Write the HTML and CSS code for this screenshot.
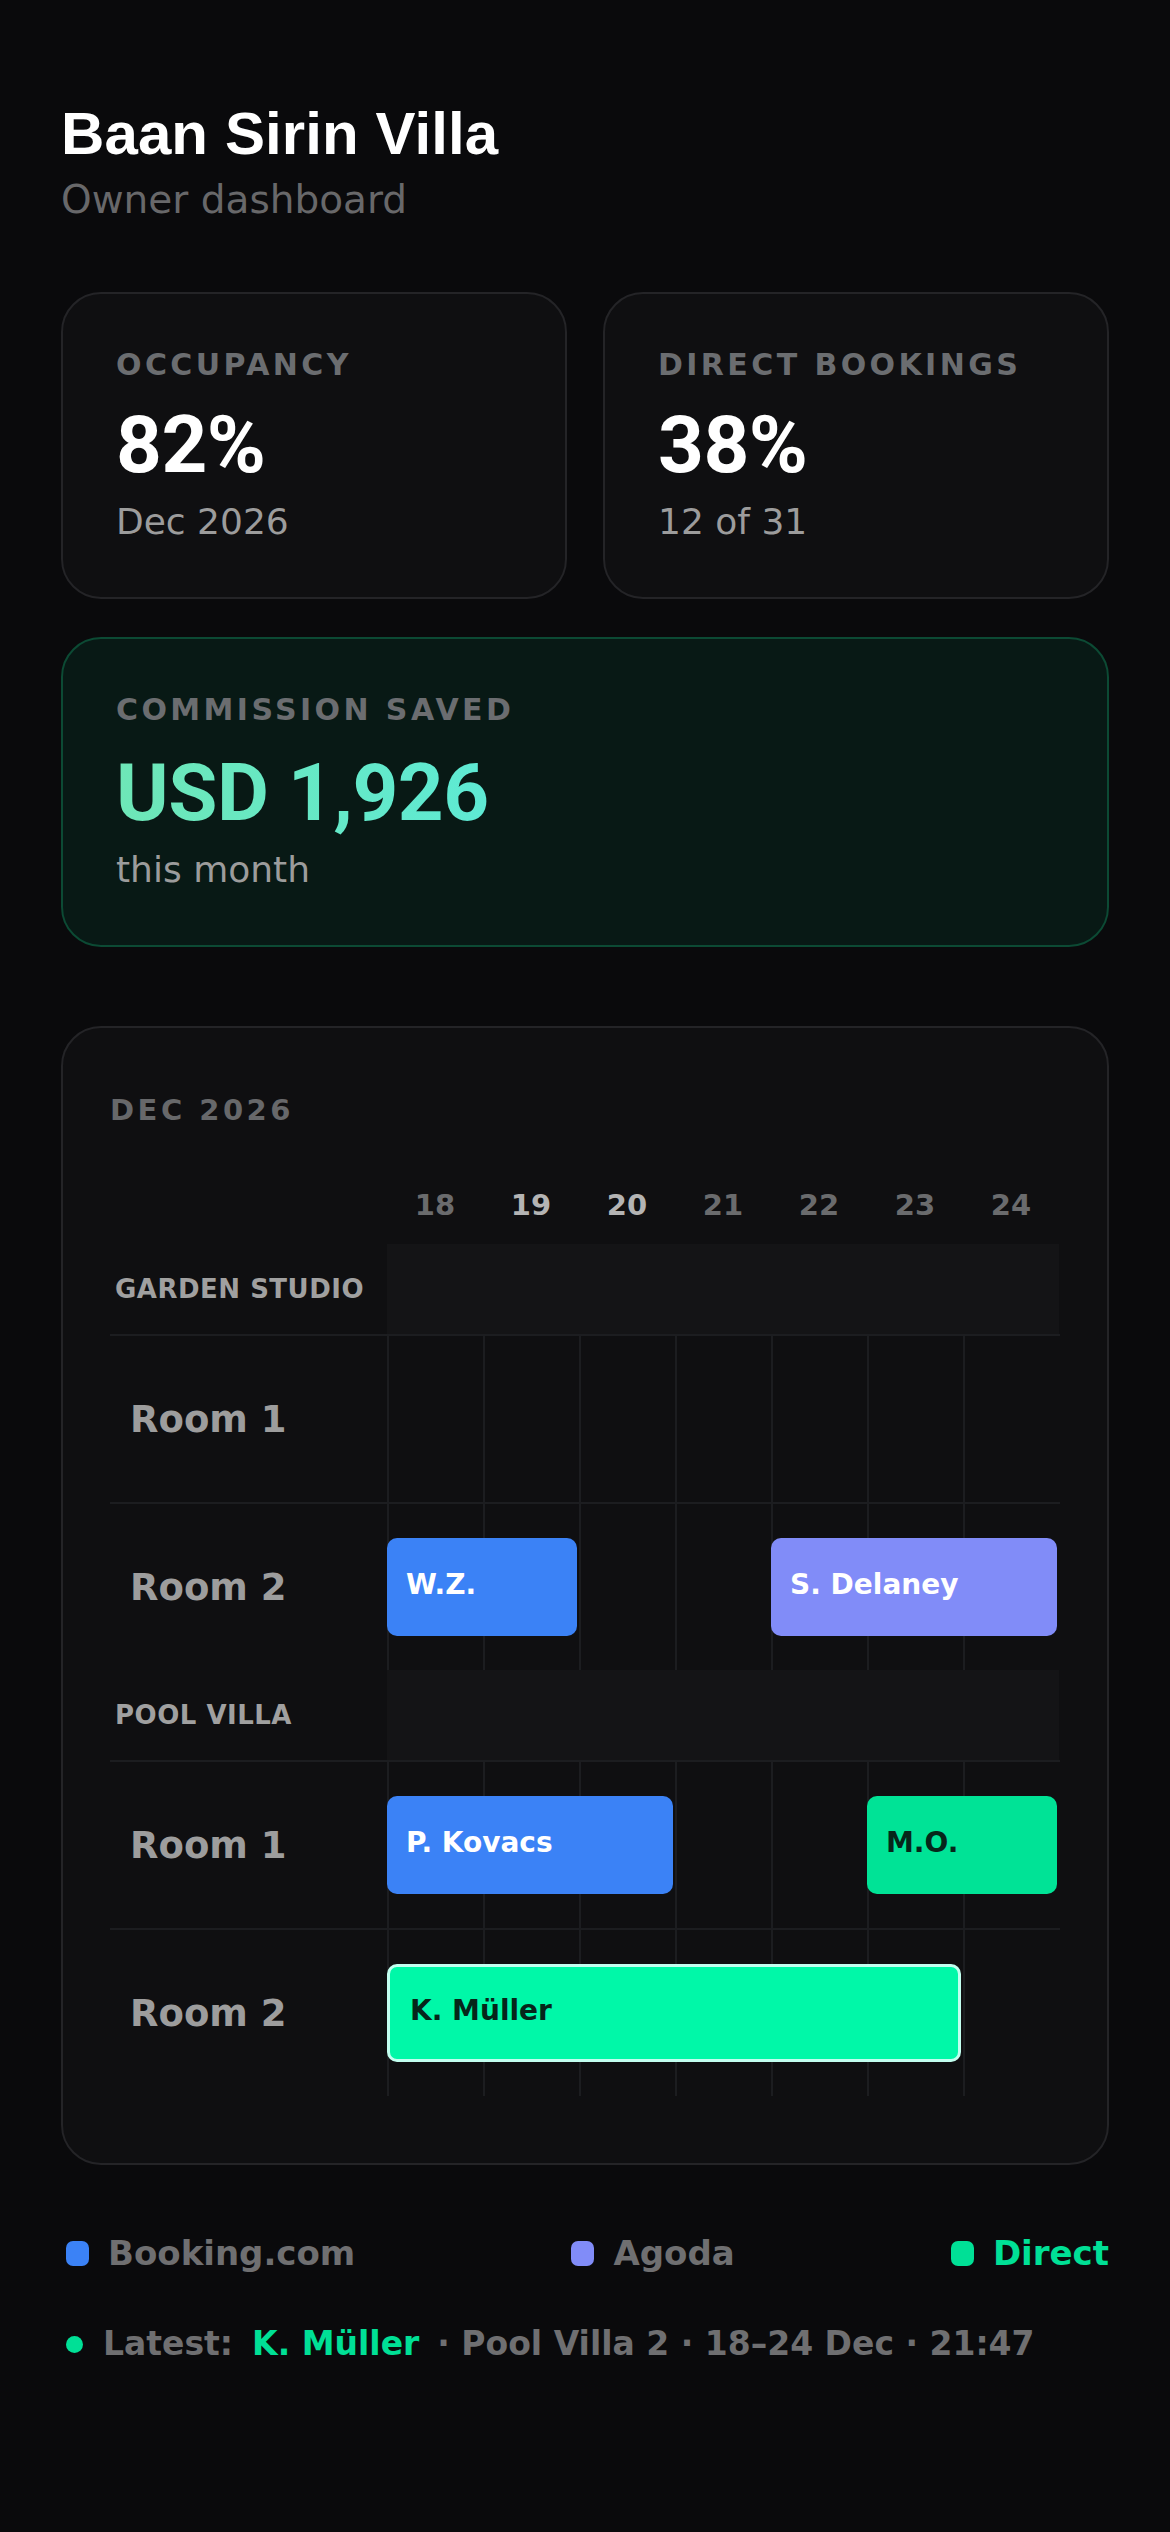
FILE: index.html
```html
<!DOCTYPE html>
<html lang="en">
<head>
    <meta charset="UTF-8">
    <meta name="viewport" content="width=device-width, initial-scale=1.0">
    <title>Baan Sirin Villa</title>
    <link rel="stylesheet" href="styles.css">
</head>
<body>
    <main class="page">
        <header class="head">
            <h1>Baan Sirin Villa</h1>
            <p>Owner dashboard</p>
        </header>

        <section class="stats">
            <div class="stat">
                <div class="stat-label">OCCUPANCY</div>
                <div class="stat-value">82%</div>
                <div class="stat-sub">Dec 2026</div>
            </div>
            <div class="stat">
                <div class="stat-label">DIRECT BOOKINGS</div>
                <div class="stat-value">38%</div>
                <div class="stat-sub">12 of 31</div>
            </div>
        </section>

        <div class="stat saved">
            <div class="stat-label">COMMISSION SAVED</div>
            <div class="stat-value"><span class="green-text">USD 1,926</span></div>
            <div class="stat-sub">this month</div>
        </div>

        <section class="cal">
            <div class="cal-title">DEC 2026</div>

            <div class="days">
                <span></span>
                <span>18</span>
                <span class="weekend">19</span>
                <span class="weekend">20</span>
                <span>21</span>
                <span>22</span>
                <span>23</span>
                <span>24</span>
            </div>

            <div class="group">
                <div class="group-name">GARDEN STUDIO</div>
                <div class="band"></div>
            </div>
            <div class="room">
                <div class="room-name">Room 1</div>
                <div class="track"></div>
            </div>
            <div class="room">
                <div class="room-name">Room 2</div>
                <div class="track">
                    <div class="bar booking" style="grid-column: 1 / 3">W.Z.</div>
                    <div class="bar agoda" style="grid-column: 5 / 8">S. Delaney</div>
                </div>
            </div>

            <div class="group">
                <div class="group-name">POOL VILLA</div>
                <div class="band"></div>
            </div>
            <div class="room">
                <div class="room-name">Room 1</div>
                <div class="track">
                    <div class="bar booking" style="grid-column: 1 / 4">P. Kovacs</div>
                    <div class="bar direct" style="grid-column: 6 / 8">M.O.</div>
                </div>
            </div>
            <div class="room">
                <div class="room-name">Room 2</div>
                <div class="track">
                    <div class="bar direct newest" style="grid-column: 1 / 7">K. Müller</div>
                </div>
            </div>
        </section>

        <div class="legend">
            <div class="legend-item"><i class="dot booking"></i>Booking.com</div>
            <div class="legend-item"><i class="dot agoda"></i>Agoda</div>
            <div class="legend-item on"><i class="dot direct"></i>Direct</div>
        </div>

        <div class="latest-line">
            <i class="pulse"></i>
            <span>Latest:</span>
            <span class="who">K. Müller</span>
            <span>· Pool Villa 2 · 18–24 Dec · 21:47</span>
        </div>
    </main>
</body>
</html>
```

FILE: styles.css
```css
* {
    margin: 0;
    padding: 0;
    box-sizing: border-box;
}

body {
    background: #0a0a0c;
    color: #fff;
    font-family: "DejaVu Sans", sans-serif;
}

.page {
    width: 1170px;
    padding: 98px 61px 80px;
}

/* header */
.head h1 {
    font-family: "Liberation Sans", Arial, sans-serif;
    font-size: 60px;
    line-height: 72px;
    font-weight: 700;
    letter-spacing: 0.1px;
}

.head p {
    margin-top: 7px;
    font-size: 39px;
    line-height: 45px;
    color: #68686a;
}

/* stat cards */
.stats {
    display: grid;
    grid-template-columns: 1fr 1fr;
    gap: 36px;
    margin-top: 70px;
}

.stat {
    background: #0f0f11;
    border: 2px solid #242427;
    border-radius: 40px;
    padding: 53px 53px 54px;
}

.stat-label {
    font-size: 30px;
    line-height: 36px;
    font-weight: 700;
    letter-spacing: 3.4px;
    color: #6b6d70;
}

.stat-value {
    margin-top: 22px;
    font-family: Roboto, sans-serif;
    font-size: 80px;
    line-height: 80px;
    font-weight: 700;
    letter-spacing: -0.5px;
}

.stat-sub {
    margin-top: 16px;
    font-size: 36px;
    line-height: 42px;
    color: #9c9c9c;
}

.saved {
    margin-top: 38px;
    background: #081915;
    border-color: #0c4a34;
}

.saved .stat-value {
    margin-top: 25px;
}

.green-text {
    background: linear-gradient(90deg, #6ee7b7, #5eead4);
    -webkit-background-clip: text;
    background-clip: text;
    color: transparent;
}

/* calendar */
.cal {
    margin-top: 79px;
    background: #0f0f11;
    border: 2px solid #242427;
    border-radius: 40px;
    padding: 65px 47px 67px;
}

.cal-title {
    font-size: 29px;
    line-height: 35px;
    font-weight: 700;
    letter-spacing: 3.5px;
    color: #67686a;
    margin-bottom: 60px;
}

.days,
.group,
.room {
    display: grid;
    grid-template-columns: 277px 672px;
}

.days {
    grid-template-columns: 277px repeat(7, 96px);
    height: 34px;
    margin-bottom: 22px;
    font-size: 29px;
    line-height: 34px;
    font-weight: 700;
    color: #6a6b6d;
    text-align: center;
}

.days .weekend {
    color: #b4b4b4;
}

.group {
    height: 90px;
}

.group-name {
    display: flex;
    align-items: center;
    padding-left: 5px;
    font-size: 26px;
    font-weight: 700;
    letter-spacing: 0.5px;
    color: #a0a0a0;
}

.band {
    background: #141416;
}

.room {
    height: 168px;
    border-top: 2px solid #1c1d20;
}

.room-name {
    display: flex;
    align-items: center;
    padding-left: 20px;
    font-size: 37px;
    font-weight: 700;
    color: #9d9d9d;
}

.track {
    display: grid;
    grid-template-columns: repeat(7, 96px);
    align-items: center;
    background-image: linear-gradient(to right, #1c1d20 2px, transparent 2px);
    background-size: 96px 100%;
}

.bar {
    grid-row: 1;
    height: 98px;
    margin-right: 2px;
    border-radius: 10px;
    display: flex;
    align-items: center;
    padding: 0 0 5px 19px;
    font-size: 28px;
    font-weight: 700;
    color: #fff;
}

.bar.booking {
    background: #3b82f6;
}

.bar.agoda {
    background: #818cf8;
}

.bar.direct {
    background: #00e396;
    color: #06261a;
}

.bar.newest {
    background: #00f8a8;
    border: 3px solid #c2fff0;
    padding-left: 20px;
}

/* legend */
.legend {
    display: flex;
    justify-content: space-between;
    margin-top: 68px;
    padding-left: 5px;
    font-size: 34px;
    line-height: 40px;
    font-weight: 700;
    color: #6f6f71;
}

.legend-item {
    display: flex;
    align-items: center;
    gap: 19px;
}

.legend-item.on {
    color: #00e096;
}

.dot {
    width: 23px;
    height: 25px;
    border-radius: 7px;
}

.dot.booking {
    background: #3b82f6;
}

.dot.agoda {
    background: #818cf8;
}

.dot.direct {
    background: #00e096;
}

.latest-line {
    display: flex;
    align-items: center;
    margin-top: 51px;
    padding-left: 5px;
    font-size: 33px;
    line-height: 40px;
    font-weight: 700;
    color: #6f6f71;
}

.pulse {
    width: 17px;
    height: 17px;
    border-radius: 50%;
    background: #00e096;
    margin-right: 20px;
}

.latest-line .who {
    color: #00e096;
    margin: 0 18px 0 19px;
}
```
